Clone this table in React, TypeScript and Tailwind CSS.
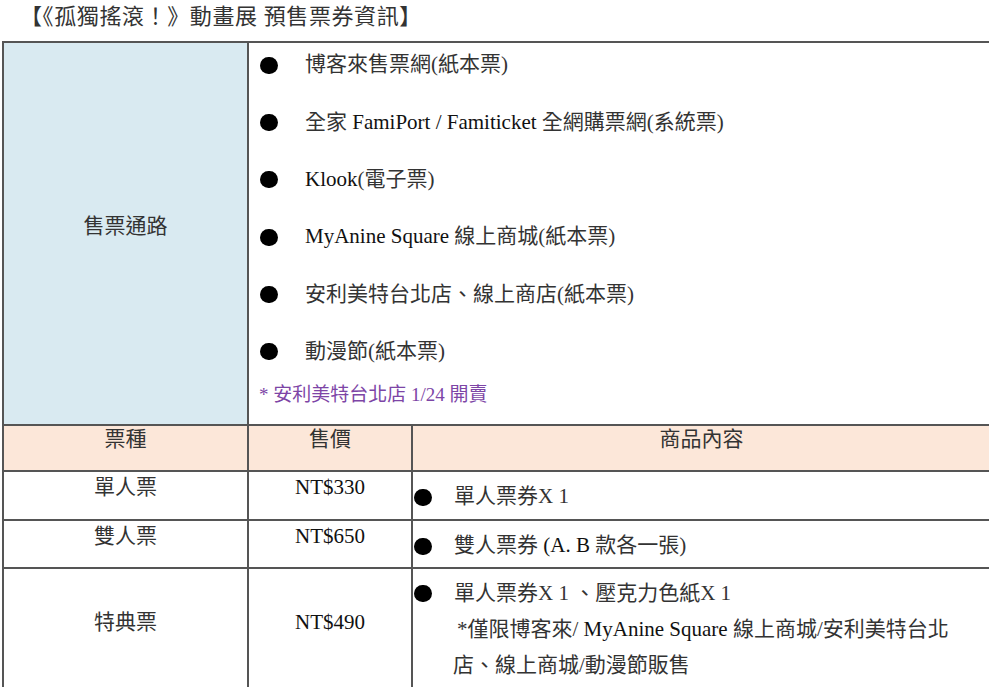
import React from "react";

const font = { fontFamily: '"Liberation Serif", "Noto Sans CJK TC", serif' };

const channels: React.ReactNode[] = [
  "博客來售票網(紙本票)",
  <>
    全家 <span className="text-[#111]">FamiPort / Famiticket</span> 全網購票網(系統票)
  </>,
  <>
    <span className="text-[#111]">Klook</span>(電子票)
  </>,
  <>
    <span className="text-[#111]">MyAnine Square</span> 線上商城(紙本票)
  </>,
  "安利美特台北店、線上商店(紙本票)",
  "動漫節(紙本票)",
];

function Dot({ className = "" }: { className?: string }) {
  return <span className={`inline-block h-[17px] w-[18px] shrink-0 rounded-full bg-black ${className}`} />;
}

export default function App() {
  return (
    <div className="h-[687px] w-[989px] overflow-hidden bg-white text-[21px] text-[#333]" style={font}>
      {/* title */}
      <div className="pl-[20px] pt-[4px] text-[22px] leading-[26px] tracking-[0.6px]">
        【《孤獨搖滾！》動畫展 預售票券資訊】
      </div>

      <table className="mt-[11px] ml-[2px] w-[990px] table-fixed border-collapse">
        <colgroup>
          <col className="w-[245px]" />
          <col className="w-[164px]" />
          <col />
        </colgroup>
        <tbody>
          <tr className="h-[383px]">
            <td className="border-2 border-[#555] bg-[#d9eaf1] pb-[16px] text-center align-middle leading-[26px]">
              售票通路
            </td>
            <td colSpan={2} className="border-2 border-[#555] p-0 align-top">
              <div className="flex flex-col gap-[21.4px] pt-[4px]">
                {channels.map((c, i) => (
                  <div key={i} className="flex h-[36px] items-center">
                    <Dot className="ml-[11px]" />
                    <span className="ml-[27px] whitespace-nowrap">{c}</span>
                  </div>
                ))}
              </div>
              <div className="mt-[12px] pl-[10px] text-[19px] leading-[26px] text-[#7d45a6]">
                * 安利美特台北店 1/24 開賣
              </div>
            </td>
          </tr>

          <tr className="h-[46px] bg-[#fce7d9]">
            <td className="border-2 border-[#555] p-0 text-center align-top leading-[26px]">票種</td>
            <td className="border-2 border-[#555] p-0 text-center align-top leading-[26px]">售價</td>
            <td className="border-2 border-[#555] p-0 text-center align-top leading-[26px]">商品內容</td>
          </tr>

          <tr className="h-[49px]">
            <td className="border-2 border-[#555] p-0 pt-[2px] text-center align-top leading-[26px]">單人票</td>
            <td className="border-2 border-[#555] p-0 pt-[2px] text-center align-top leading-[26px] text-[#111]">
              NT$330
            </td>
            <td className="border-2 border-[#555] p-0 pt-[12px] align-top">
              <div className="flex h-[26px] items-center">
                <Dot className="ml-[1px]" />
                <span className="ml-[22px] whitespace-nowrap">單人票券X 1</span>
              </div>
            </td>
          </tr>

          <tr className="h-[48px]">
            <td className="border-2 border-[#555] p-0 pt-[2px] text-center align-top leading-[26px]">雙人票</td>
            <td className="border-2 border-[#555] p-0 pt-[2px] text-center align-top leading-[26px] text-[#111]">
              NT$650
            </td>
            <td className="border-2 border-[#555] p-0 pt-[12px] align-top">
              <div className="flex h-[26px] items-center">
                <Dot className="ml-[1px]" />
                <span className="ml-[22px] whitespace-nowrap">
                  雙人票券 <span className="text-[#111]">(A. B</span> 款各一張)
                </span>
              </div>
            </td>
          </tr>

          <tr className="h-[140px]">
            <td className="border-2 border-t-[#222] border-[#555] p-0 pt-[40px] text-center align-top leading-[26px]">
              特典票
            </td>
            <td className="border-2 border-t-[#222] border-[#555] p-0 pt-[40px] text-center align-top leading-[26px] text-[#111]">
              NT$490
            </td>
            <td className="border-2 border-t-[#222] border-[#555] p-0 pt-[6px] align-top leading-[36px]">
              <div className="flex h-[36px] items-center">
                <Dot className="ml-[1px]" />
                <span className="ml-[22px] whitespace-nowrap">單人票券X 1 、壓克力色紙X 1</span>
              </div>
              <div className="whitespace-nowrap pl-[44px]">
                *僅限博客來/ <span className="text-[#111]">MyAnine Square</span> 線上商城/安利美特台北
              </div>
              <div className="whitespace-nowrap pl-[40px]">店、線上商城/動漫節販售</div>
            </td>
          </tr>
        </tbody>
      </table>
    </div>
  );
}
